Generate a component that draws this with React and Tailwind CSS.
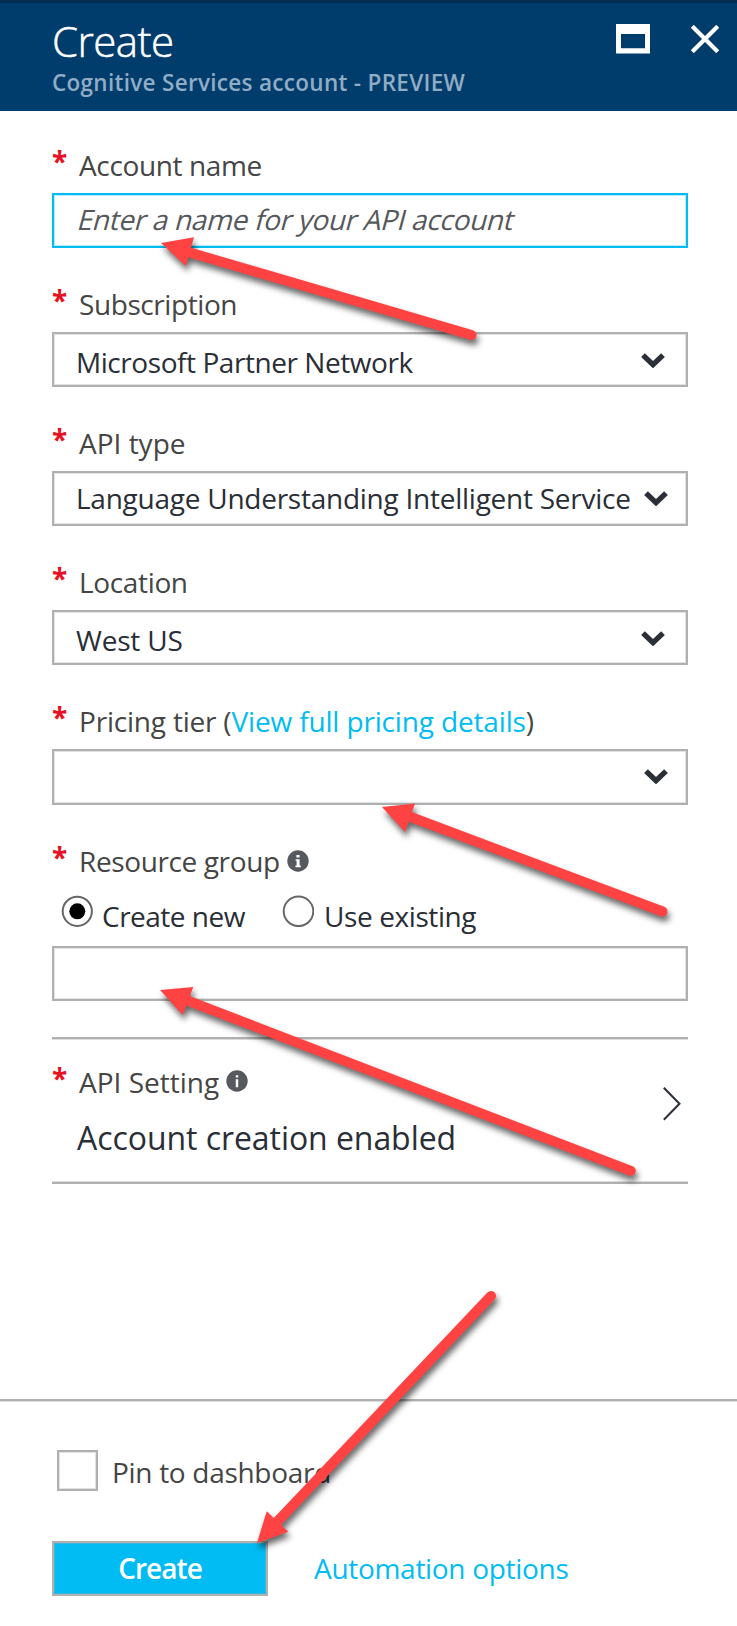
function Chevron() {
  return (
    <svg className="h-[15px] w-6 shrink-0" viewBox="0 0 24 15" fill="none">
      <path d="M2 2.1 L12 11.6 L22 2.1" stroke="#2b2f38" strokeWidth="5.4" />
    </svg>
  );
}

function Info({ serif }) {
  return (
    <svg className="size-[22px] shrink-0" viewBox="0 0 22 22">
      <circle cx="11" cy="11" r="10.7" fill="#56595e" />
      <path
        d={serif ? 'M9.4 5h3.2v2.4H9.4z M8.6 9.2h4v6.4h1.2v1.6H8.4v-1.6h1.2v-4.8h-1z' : 'M9.8 5.2h2.4v2.3H9.8z M9.8 9.2h2.4v8H9.8z'}
        fill="#fff"
      />
    </svg>
  );
}

function Label({ children, className = '' }) {
  return (
    <div className={`flex h-10 text-[28px] leading-10 whitespace-pre text-[#454545] ${className}`}>
      <span className="mt-[-4px] w-[27px] shrink-0 font-bold text-[#e81123]">*</span>
      {children}
    </div>
  );
}

function Select({ children, className }) {
  return (
    <div className={`flex items-start justify-between border-2 border-[#b0b0b0] pl-[22px] text-[28px] leading-10 whitespace-pre text-[#2a2e36] shadow-[inset_0_0_0_1px_#e2e2e2] ${className}`}>
      {children}
    </div>
  );
}

function Arrow({ shaft, head }) {
  return (
    <g>
      <path d={shaft} stroke="#ff4343" strokeWidth="10" strokeLinecap="round" />
      <path d={head} fill="#ff4343" />
    </g>
  );
}

export default function App() {
  return (
    <div className="relative flex h-[1626px] w-[737px] flex-col overflow-hidden bg-white font-['Open_Sans','Noto_Sans',sans-serif]">
      <header className="flex h-[111px] shrink-0 justify-between border-t-[3px] border-[#032d51] bg-[#003c6c] pl-[52px]">
        <div className="pt-[14px]">
          <h1 className="h-12 text-[42px] leading-[48px] font-light tracking-[-0.55px] text-white [-webkit-text-stroke:0.5px_white]">Create</h1>
          <p className="mt-[3px] text-[22.5px] leading-[30px] font-semibold tracking-[0.3px] text-[#91adc5]">Cognitive Services account - PREVIEW</p>
        </div>
        <div className="flex items-start gap-[41px] pt-[21px] pr-[18px]">
          <svg className="h-[30px] w-[34px]" viewBox="0 0 34 30">
            <path d="M0 0H34V29.6H0z M5 10V24.3H29V10z" fill="#fff" fillRule="evenodd" />
          </svg>
          <svg className="mt-px h-7 w-7" viewBox="0 0 28 28">
            <path d="M1.3 1.3 L26.7 26.7 M26.7 1.3 L1.3 26.7" stroke="#fff" strokeWidth="4.2" />
          </svg>
        </div>
      </header>

      <main className="flex flex-col px-[52px] pt-[34px] pr-[49px]">
        <Label><span className="tracking-[-0.37px]">Account name</span></Label>
        <div className="mt-[8px] h-[55px] border-2 border-[#00bcf2] pl-[25px] text-[28px] leading-10 text-[#56585c] shadow-[inset_0_0_0_1px_#b5ecfb]">
          <span className="mt-[4px] inline-block -skew-x-[15deg] tracking-[-0.33px]">Enter a name for your API account</span>
        </div>

        <Label className="mt-[36px]"><span className="tracking-[-0.42px]">Subscription</span></Label>
        <Select className="mt-[8px] h-[55px] pt-[8px] pr-[21px]">
          <span className="tracking-[-0.44px]">Microsoft Partner Network</span>
          <div className="pt-[10.5px]"><Chevron /></div>
        </Select>

        <Label className="mt-[36px]"><span>API type</span></Label>
        <Select className="mt-[8px] h-[55px] pt-[5px] pr-[18px]">
          <span className="tracking-[-0.25px]">Language Understanding Intelligent Service</span>
          <div className="pt-[13px]"><Chevron /></div>
        </Select>

        <Label className="mt-[36px]"><span className="tracking-[-0.35px]">Location</span></Label>
        <Select className="mt-[8px] h-[55px] pt-[8px] pr-[21px]">
          <span className="tracking-[-0.2px]">West US</span>
          <div className="pt-[10.5px]"><Chevron /></div>
        </Select>

        <Label className="mt-[36px]">
          <span className="tracking-[-0.2px]">Pricing tier (</span>
          <a className="tracking-[-0.15px] text-[#00bcf2]">View full pricing details</a>
          <span>)</span>
        </Label>
        <Select className="mt-[8px] h-[56px] pt-[5px] pr-[18px]">
          <span />
          <div className="pt-[13px]"><Chevron /></div>
        </Select>

        <Label className="mt-[36px]">
          <span className="tracking-[-0.38px]">Resource group</span>
          <div className="ml-[7px] pt-[9px]"><Info serif /></div>
        </Label>
        <div className="mt-[15px] flex h-10 text-[28px] leading-10 text-[#2a2e36]">
          <svg className="mt-[-1px] ml-[9px] size-8" viewBox="0 0 32 32">
            <circle cx="16.3" cy="16.3" r="14.6" fill="#fff" stroke="#666" strokeWidth="2" />
            <circle cx="16.3" cy="16.3" r="8" fill="#000" />
          </svg>
          <span className="ml-[9px] w-[160px] tracking-[-0.5px]">Create new</span>
          <svg className="mt-[-1px] ml-[20px] size-8" viewBox="0 0 32 32">
            <circle cx="16.5" cy="16.3" r="14.8" fill="#fff" stroke="#666" strokeWidth="2" />
          </svg>
          <span className="ml-[10px] tracking-[-0.4px]">Use existing</span>
        </div>
        <div className="mt-[10px] h-[55px] border-2 border-[#b0b0b0] shadow-[inset_0_0_0_1px_#e2e2e2]" />

        <section className="mt-[36px] flex h-[147px] justify-between border-t-2 border-b-2 border-[#b0b0b0] pt-[23px] pr-[7px] shadow-[inset_0_1px_0_#dcdcdc,inset_0_-1px_0_#dcdcdc]">
          <div>
            <Label>
              <span>API Setting</span>
              <div className="ml-[7px] pt-[8px]"><Info /></div>
            </Label>
            <div className="mt-[14px] pl-[25px] text-[32px] leading-[44px] tracking-[-0.06px] text-[#2a2e36]">Account creation enabled</div>
          </div>
          <svg className="mt-[25px] h-[34px] w-[18px]" viewBox="0 0 18 34" fill="none">
            <path d="M0.8 0.8 L16.5 16.8 L0.8 32.8" stroke="#2a2e36" strokeWidth="2" />
          </svg>
        </section>
      </main>

      <footer className="mt-[215px] border-t-2 border-[#b0b0b0] pl-[52px] shadow-[inset_0_1px_0_#dcdcdc]">
        <div className="flex pt-[49px] pl-[5px] text-[28px] leading-10 text-[#454545]">
          <div className="size-[41px] border-2 border-[#b0b0b0] shadow-[inset_0_0_0_1px_#e2e2e2]" />
          <span className="mt-[2px] ml-[14px] tracking-[-0.3px]">Pin to dashboard</span>
        </div>
        <div className="mt-[49px] flex items-start text-[28px] leading-10">
          <button className="flex h-[55px] w-[216px] items-start justify-center border-2 border-[#b0b0b0] bg-[#00bcf2] pt-[5px] leading-10 font-semibold tracking-[-0.95px] text-white shadow-[inset_0_0_0_1px_#3ab7dc]">Create</button>
          <a className="mt-[7px] ml-[46px] tracking-[-0.3px] text-[#00bcf2]">Automation options</a>
        </div>
      </footer>

      <svg className="pointer-events-none absolute inset-0 h-[1626px] w-[737px] drop-shadow-[2px_5px_3px_rgba(0,0,0,0.6)]" viewBox="0 0 737 1626" fill="none">
        <Arrow shaft="M188 252 L471.5 335" head="M161 243 L194 237.3 L185.7 266z" />
        <Arrow shaft="M408 816 L662.5 911.5" head="M382 807 L415 803.5 L405 832z" />
        <Arrow shaft="M186 1000 L630.8 1170.8" head="M160 990 L193.3 987 L182.7 1015z" />
        <Arrow shaft="M276 1523 L491 1296" head="M257 1543 L266.7 1511.3 L288.3 1531.7z" />
      </svg>
    </div>
  );
}
